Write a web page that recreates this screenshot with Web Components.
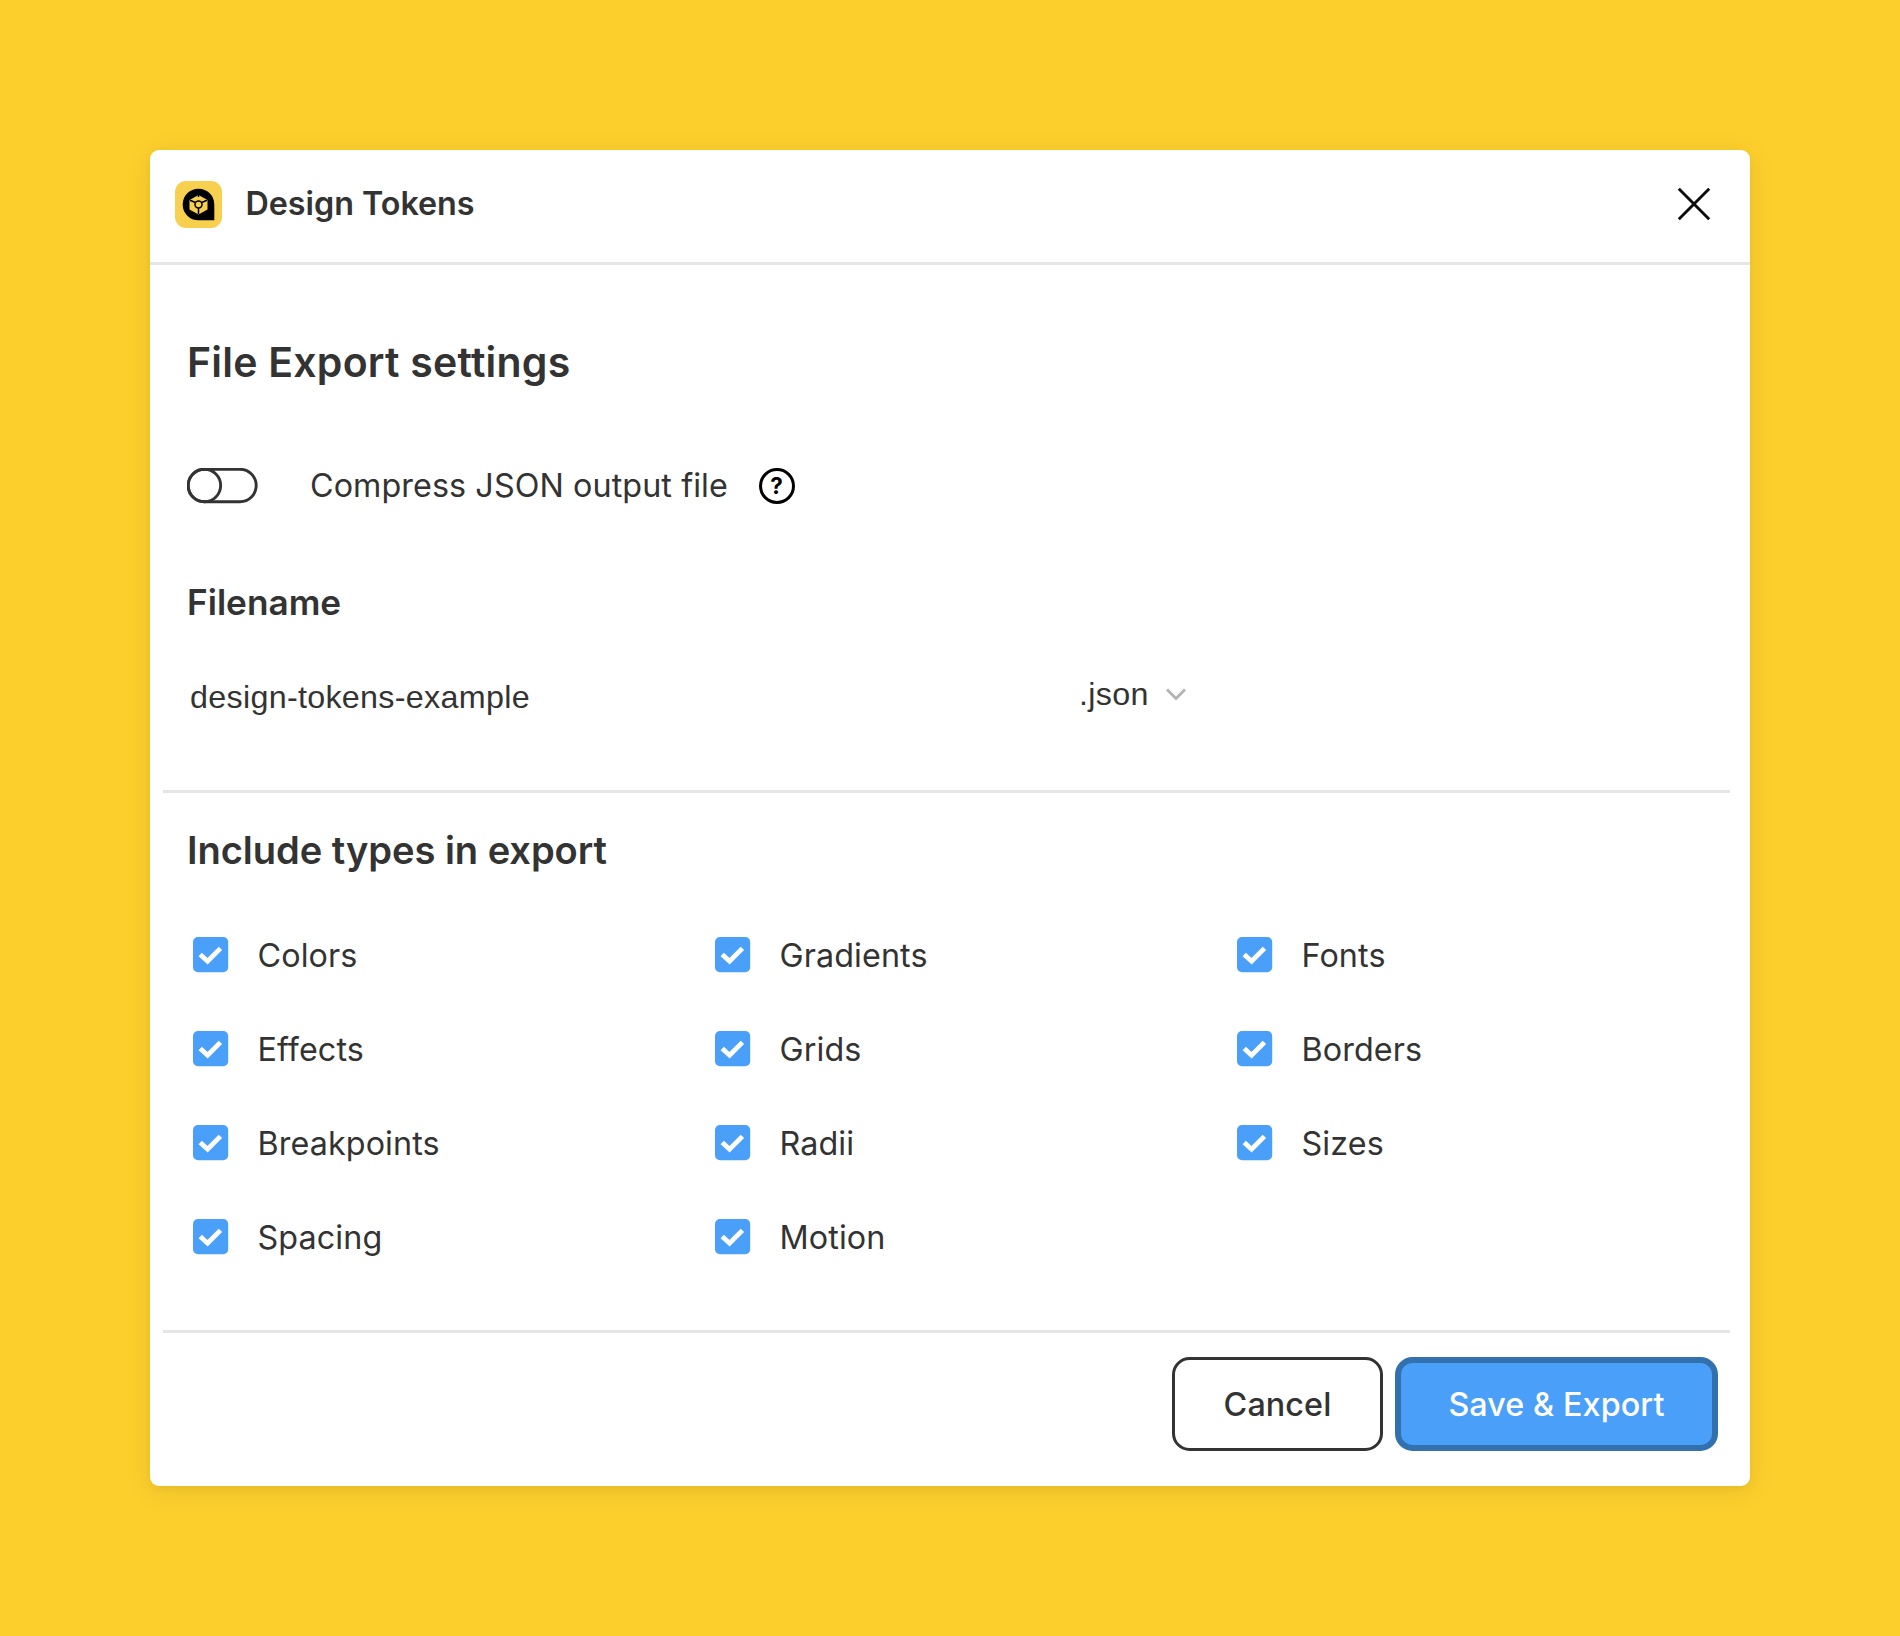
<!DOCTYPE html>
<html lang="en">
<head>
<meta charset="utf-8">
<title>Design Tokens</title>
<style>
html, body { margin: 0; height: 100%; }
body { background: #fccf2d; font-family: Inter, "Liberation Sans", sans-serif; color: #333; }
</style>
</head>
<body>
<export-page></export-page>
<script>
const define = (name, html) => customElements.define(name, class extends HTMLElement {
  connectedCallback() {
    if (this.shadowRoot) return;
    const t = document.createElement('template');
    t.innerHTML = html;
    this.attachShadow({ mode: 'open' }).append(t.content.cloneNode(true));
  }
});

define('plugin-logo', `
<style>:host{display:block;width:47px;height:47px} svg{display:block}</style>
<svg width="47" height="47" viewBox="0 0 47 47">
  <rect width="47" height="47" rx="11" fill="#f7d04f"/>
  <path d="M39.3 39.3V23.5A15.8 15.8 0 1 0 23.5 39.3Z" fill="#000"/>
  <path d="M23.5 14l9 4.9v9.6l-9 4.9-9-4.9v-9.6z" fill="#f7d04f"/>
  <g stroke="#000" stroke-width="1.5" fill="none">
    <path d="M15 19.2l5.4 2.3M32 19.2l-5.4 2.3M23.5 27v6"/>
    <circle cx="23.5" cy="23.4" r="3.5"/>
    <path d="M23.5 13.4v2.6"/>
  </g>
</svg>`);

define('close-button', `
<style>:host{display:block;width:34px;height:34px} svg{display:block}</style>
<svg width="34" height="34" viewBox="0 0 34 34"><path d="M1.8 1.8L32.2 32.2M32.2 1.8L1.8 32.2" stroke="#0d0d0d" stroke-width="2.9"/></svg>`);

define('window-header', `
<style>
:host{display:flex;box-sizing:border-box;height:115px;padding:0 39px 4px 25px;border-bottom:3px solid #e5e5e5;align-items:center}
.title{flex:1;margin-left:23.5px;font-size:32.3px;font-weight:600;letter-spacing:-.03px;line-height:40px}
</style>
<plugin-logo></plugin-logo><div class="title"><slot></slot></div><close-button></close-button>`);

define('section-title', `
<style>:host{display:flex;align-items:center;font-weight:600;white-space:nowrap}</style><slot></slot>`);

define('toggle-switch', `
<style>:host{display:block;width:71px;height:36px} svg{display:block}</style>
<svg width="71" height="36" viewBox="0 0 71 36" fill="none" stroke="#333" stroke-width="2.9">
<rect x="1.2" y="1.3" width="68" height="32.5" rx="16.25"/><circle cx="17.4" cy="17.55" r="16.25"/></svg>`);

define('help-icon', `
<style>:host{display:block;width:36px;height:36px}
div{box-sizing:border-box;width:36px;height:36px;border:3px solid #000;border-radius:50%;display:flex;align-items:center;justify-content:center;color:#000;font-size:22.5px;font-weight:700;line-height:30px}</style>
<div>?</div>`);

define('setting-row', `
<style>
:host{display:flex;align-items:center;height:94px;font-size:32.3px;letter-spacing:.08px;margin-left:-.5px}
.label{margin:0 30.7px 0 52.5px;white-space:nowrap}
</style>
<toggle-switch></toggle-switch><span class="label"><slot></slot></span><help-icon></help-icon>`);

define('filename-field', `
<style>
:host{display:flex;height:94px;font-family:"Liberation Sans",Arial,sans-serif;font-size:32.27px;letter-spacing:.3px;line-height:94px}
.name{width:889px;padding-left:3px}
.type{display:flex;align-items:center;height:88px;line-height:88px}
svg{margin-left:17.5px}
</style>
<span class="name"><slot></slot></span>
<span class="type"><slot name="type"></slot><svg width="20" height="13" viewBox="0 0 20 13"><path d="M1 1.5l9 9 9-9" fill="none" stroke="#b3b3b3" stroke-width="2.9"/></svg></span>`);

define('type-option', `
<style>
:host{display:flex;align-items:center;height:94px;font-size:32.3px;letter-spacing:.1px}
svg{margin-right:29px}
</style>
<svg width="36" height="36" viewBox="0 0 36 36"><rect width="35.2" height="35.2" rx="5" fill="#4a9ff8"/><path d="M7.2 17.4l7.4 6.8 12.8-12.8" fill="none" stroke="#fff" stroke-width="4.8"/></svg><slot></slot>`);

define('type-grid', `
<style>:host{display:grid;grid-template-columns:repeat(3,522px);margin-left:5.5px}</style><slot></slot>`);

define('rule-line', `
<style>:host{display:block;height:3px;margin:0 20px 0 13.4px;background:#e5e5e5}</style>`);

define('action-button', `
<style>
:host{display:flex;box-sizing:border-box;width:211px;height:94px;border:3px solid #333;border-radius:17.6px;align-items:center;justify-content:center;font-size:32.3px;font-weight:500;letter-spacing:.1px;white-space:nowrap}
:host([primary]){width:323px;border:6px solid #3370ae;background:#4a9ff8;color:#fff}
</style><slot></slot>`);

define('export-dialog', `
<style>
:host{display:flex;flex-direction:column;box-sizing:border-box;width:1600px;height:1336px;background:#fff;border-radius:9px;box-shadow:0 5px 28px rgba(0,0,0,.08),0 3px 7px rgba(0,0,0,.04)}
.body{padding:0 37px}
.h1{height:60px;margin-top:66.5px;font-size:41px;letter-spacing:.22px}
.row{margin-top:47px}
.h2{height:50px;margin-top:44px;font-size:35.2px}
.file{margin-top:23.5px}
.line2{margin-top:46px}
.h3{height:50px;margin-top:32px;font-size:38.1px;letter-spacing:-.05px}
.types{margin-top:33px}
.line3{margin-top:46px}
.actions{display:flex;justify-content:flex-end;gap:12px;padding:24px 32px 0}
</style>
<window-header>Design Tokens</window-header>
<div class="body">
<section-title class="h1">File Export settings</section-title>
<setting-row class="row">Compress JSON output file</setting-row>
<section-title class="h2">Filename</section-title>
<filename-field class="file">design-tokens-example<span slot="type">.json</span></filename-field>
</div>
<rule-line class="line2"></rule-line>
<div class="body">
<section-title class="h3">Include types in export</section-title>
<type-grid class="types">
<type-option>Colors</type-option><type-option>Gradients</type-option><type-option>Fonts</type-option>
<type-option>Effects</type-option><type-option>Grids</type-option><type-option>Borders</type-option>
<type-option>Breakpoints</type-option><type-option>Radii</type-option><type-option>Sizes</type-option>
<type-option>Spacing</type-option><type-option>Motion</type-option>
</type-grid>
</div>
<rule-line class="line3"></rule-line>
<div class="actions"><action-button>Cancel</action-button><action-button primary>Save &amp; Export</action-button></div>`);

define('export-page', `
<style>:host{display:flex;box-sizing:border-box;height:1636px;padding:150px;align-items:flex-start;background:#fccf2d}</style>
<export-dialog></export-dialog>`);
</script>
</body>
</html>
